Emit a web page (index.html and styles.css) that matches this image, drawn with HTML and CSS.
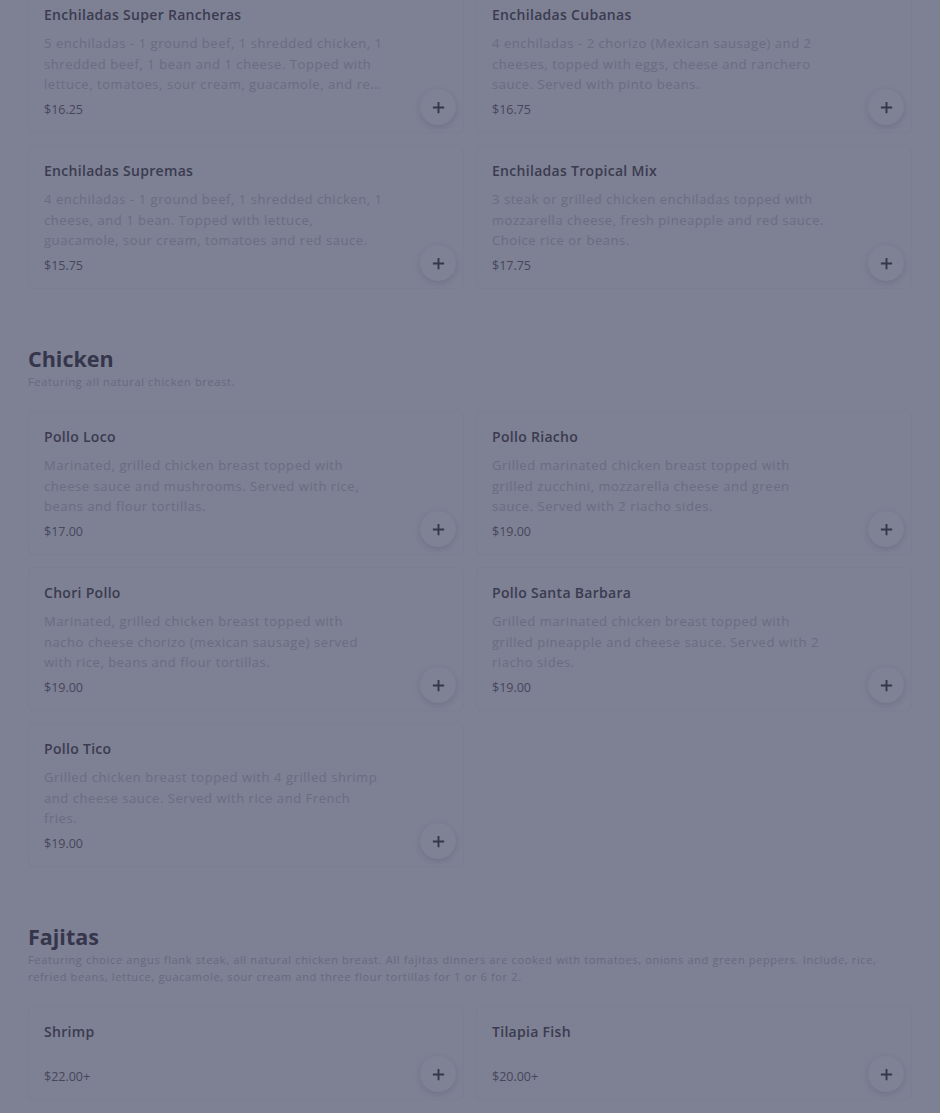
FILE: index.html
```html
<!DOCTYPE html>
<html lang="en">
<head>
    <meta charset="UTF-8">
    <meta name="viewport" content="width=device-width, initial-scale=1.0">
    <title>Menu</title>
    <link rel="stylesheet" href="styles.css">
</head>
<body>
    <div class="menu">
        <section class="kategori pertama">
            <div class="daftar">
                <div class="kartu">
                    <h3>Enchiladas Super Rancheras</h3>
                    <p class="desk">5 enchiladas - 1 ground beef, 1 shredded chicken, 1 shredded beef, 1 bean and 1 cheese. Topped with lettuce, tomatoes, sour cream, guacamole, and red sauce. Choice rice or beans.</p>
                    <span class="harga">$16.25</span>
                    <button class="tambah"><svg viewBox="0 0 16 16"><path d="M8 2v12M2 8h12"/></svg></button>
                </div>
                <div class="kartu">
                    <h3>Enchiladas Cubanas</h3>
                    <p class="desk">4 enchiladas - 2 chorizo (Mexican sausage) and 2 cheeses, topped with eggs, cheese and ranchero sauce. Served with pinto beans.</p>
                    <span class="harga">$16.75</span>
                    <button class="tambah"><svg viewBox="0 0 16 16"><path d="M8 2v12M2 8h12"/></svg></button>
                </div>
                <div class="kartu">
                    <h3>Enchiladas Supremas</h3>
                    <p class="desk">4 enchiladas - 1 ground beef, 1 shredded chicken, 1 cheese, and 1 bean. Topped with lettuce, guacamole, sour cream, tomatoes and red sauce.</p>
                    <span class="harga">$15.75</span>
                    <button class="tambah"><svg viewBox="0 0 16 16"><path d="M8 2v12M2 8h12"/></svg></button>
                </div>
                <div class="kartu">
                    <h3>Enchiladas Tropical Mix</h3>
                    <p class="desk">3 steak or grilled chicken enchiladas topped with mozzarella cheese, fresh pineapple and red sauce. Choice rice or beans.</p>
                    <span class="harga">$17.75</span>
                    <button class="tambah"><svg viewBox="0 0 16 16"><path d="M8 2v12M2 8h12"/></svg></button>
                </div>
            </div>
        </section>

        <section class="kategori">
            <h2>Chicken</h2>
            <p class="sub">Featuring all natural chicken breast.</p>
            <div class="daftar">
                <div class="kartu">
                    <h3>Pollo Loco</h3>
                    <p class="desk">Marinated, grilled chicken breast topped with cheese sauce and mushrooms. Served with rice, beans and flour tortillas.</p>
                    <span class="harga">$17.00</span>
                    <button class="tambah"><svg viewBox="0 0 16 16"><path d="M8 2v12M2 8h12"/></svg></button>
                </div>
                <div class="kartu">
                    <h3>Pollo Riacho</h3>
                    <p class="desk">Grilled marinated chicken breast topped with grilled zucchini, mozzarella cheese and green sauce. Served with 2 riacho sides.</p>
                    <span class="harga">$19.00</span>
                    <button class="tambah"><svg viewBox="0 0 16 16"><path d="M8 2v12M2 8h12"/></svg></button>
                </div>
                <div class="kartu">
                    <h3>Chori Pollo</h3>
                    <p class="desk">Marinated, grilled chicken breast topped with nacho cheese chorizo (mexican sausage) served with rice, beans and flour tortillas.</p>
                    <span class="harga">$19.00</span>
                    <button class="tambah"><svg viewBox="0 0 16 16"><path d="M8 2v12M2 8h12"/></svg></button>
                </div>
                <div class="kartu">
                    <h3>Pollo Santa Barbara</h3>
                    <p class="desk">Grilled marinated chicken breast topped with grilled pineapple and cheese sauce. Served with 2 riacho sides.</p>
                    <span class="harga">$19.00</span>
                    <button class="tambah"><svg viewBox="0 0 16 16"><path d="M8 2v12M2 8h12"/></svg></button>
                </div>
                <div class="kartu">
                    <h3>Pollo Tico</h3>
                    <p class="desk">Grilled chicken breast topped with 4 grilled shrimp and cheese sauce. Served with rice and French fries.</p>
                    <span class="harga">$19.00</span>
                    <button class="tambah"><svg viewBox="0 0 16 16"><path d="M8 2v12M2 8h12"/></svg></button>
                </div>
            </div>
        </section>

        <section class="kategori">
            <h2>Fajitas</h2>
            <p class="sub">Featuring choice angus flank steak, all natural chicken breast. All fajitas dinners are cooked with tomatoes, onions and green peppers. Include, rice, refried beans, lettuce, guacamole, sour cream and three flour tortillas for 1 or 6 for 2.</p>
            <div class="daftar">
                <div class="kartu">
                    <h3>Shrimp</h3>
                    <span class="harga kosong">$22.00+</span>
                    <button class="tambah"><svg viewBox="0 0 16 16"><path d="M8 2v12M2 8h12"/></svg></button>
                </div>
                <div class="kartu">
                    <h3>Tilapia Fish</h3>
                    <span class="harga kosong">$20.00+</span>
                    <button class="tambah"><svg viewBox="0 0 16 16"><path d="M8 2v12M2 8h12"/></svg></button>
                </div>
            </div>
        </section>
    </div>
</body>
</html>
```

FILE: styles.css
```css
body {
    margin: 0;
    background-color: #7e8094;
    font-family: "Open Sans", Lato, sans-serif;
    color: #3a3b4f;
}

.menu {
    padding: 0 28px;
}

.kategori {
    margin-top: 56px;
}
.kategori.pertama {
    margin-top: -11px;
}

h2 {
    margin: 0;
    font-size: 21.5px;
    line-height: 28px;
    font-weight: 700;
    color: #35364b;
}
.sub {
    margin: 0;
    font-size: 11px;
    line-height: 17px;
    letter-spacing: 0.65px;
    color: #67697d;
}

.daftar {
    display: grid;
    grid-template-columns: 1fr 1fr;
    gap: 12px;
    margin-top: 21px;
}
.pertama .daftar {
    margin-top: 0;
}

.kartu {
    position: relative;
    display: flex;
    flex-direction: column;
    align-items: flex-start;
    min-height: 94px;
    padding: 16px 16px 13px;
    border-radius: 6px;
    box-shadow: inset 0 0 0 1px rgba(60, 62, 82, 0.04);
    box-sizing: border-box;
}
.kartu h3 {
    margin: 0;
    font-size: 14px;
    line-height: 20px;
    font-weight: 600;
    letter-spacing: 0.3px;
    color: #3a3b4f;
}
.desk {
    margin: 8px 0 0;
    max-width: 340px;
    font-size: 13px;
    line-height: 20.5px;
    letter-spacing: 0.55px;
    color: #6a6c80;
    display: -webkit-box;
    -webkit-line-clamp: 3;
    -webkit-box-orient: vertical;
    overflow: hidden;
}
.harga {
    margin-top: 5.5px;
    font-size: 12.5px;
    line-height: 20px;
    color: #45475b;
}
.harga.kosong {
    margin-top: 25px;
}

.tambah {
    position: absolute;
    right: 8px;
    bottom: 8px;
    width: 36px;
    height: 36px;
    border: none;
    border-radius: 50%;
    padding: 0;
    background-color: #7f8195;
    box-shadow: 0 2px 6px rgba(40, 42, 60, 0.16);
    display: flex;
    align-items: center;
    justify-content: center;
}
.tambah svg {
    width: 15px;
    height: 15px;
    stroke: #35364a;
    stroke-width: 2;
    fill: none;
}
```
